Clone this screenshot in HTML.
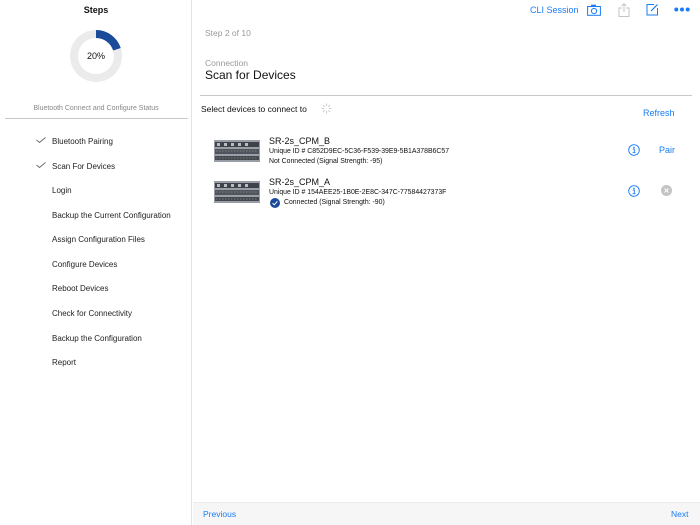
<!DOCTYPE html>
<html><head><meta charset="utf-8"><style>
*{margin:0;padding:0;box-sizing:border-box}
body{width:700px;height:525px;overflow:hidden;font-family:"Liberation Sans",sans-serif;background:#fff;position:relative;color:#111}
.side{position:absolute;left:0;top:0;width:192px;height:525px;background:#fff;border-right:1px solid #e4e4e4}
.a{position:absolute;white-space:nowrap}
.blue{color:#1a7cf5}
.step{position:absolute;left:52px;font-size:8px;color:#222}
.chk{position:absolute;left:36px;width:10px;height:6px}
.bottom{position:absolute;left:193px;top:502px;width:507px;height:23px;background:#f6f6f6;border-top:1px solid #ececec}
</style></head><body>
<div class="side">
 <div class="a" style="left:0;width:192px;text-align:center;top:5px;font-size:9px;font-weight:bold">Steps</div>
 <svg class="a" style="left:70px;top:30px" width="52" height="52" viewBox="0 0 52 52">
  <circle cx="26" cy="26" r="22" fill="none" stroke="#ebebeb" stroke-width="8"/>
  <circle cx="26" cy="26" r="22" fill="none" stroke="#1a4a9a" stroke-width="8" stroke-dasharray="27.6 200" transform="rotate(-90 26 26)"/>
 </svg>
 <div class="a" style="left:70px;width:52px;text-align:center;top:51px;font-size:9px">20%</div>
 <div class="a" style="left:0;width:192px;text-align:center;top:105px;font-size:7px;color:#888">Bluetooth Connect and Configure Status</div>
 <div class="a" style="left:5px;top:118px;width:183px;height:1px;background:#c8c8c8"></div>
 <svg class="chk" style="top:137px" viewBox="0 0 10 6"><path d="M0.5 3 L3.5 5.5 L9.5 0.5" fill="none" stroke="#666" stroke-width="0.9"/></svg>
 <svg class="chk" style="top:162px" viewBox="0 0 10 6"><path d="M0.5 3 L3.5 5.5 L9.5 0.5" fill="none" stroke="#666" stroke-width="0.9"/></svg>
 <div class="step" style="top:137px">Bluetooth Pairing</div>
 <div class="step" style="top:162px">Scan For Devices</div>
 <div class="step" style="top:186px">Login</div>
 <div class="step" style="top:211px">Backup the Current Configuration</div>
 <div class="step" style="top:235px">Assign Configuration Files</div>
 <div class="step" style="top:260px">Configure Devices</div>
 <div class="step" style="top:284px">Reboot Devices</div>
 <div class="step" style="top:309px">Check for Connectivity</div>
 <div class="step" style="top:334px">Backup the Configuration</div>
 <div class="step" style="top:358px">Report</div>
</div>

<div class="a blue" style="left:530px;top:5px;font-size:9px">CLI Session</div>
<svg class="a" style="left:587px;top:4px" width="14" height="12" viewBox="0 0 14 12"><rect x="0.6" y="2.5" width="12.8" height="8.8" fill="none" stroke="#1a7cf5" stroke-width="1"/><rect x="4" y="0.7" width="5" height="2" fill="#1a7cf5"/><circle cx="7" cy="7" r="2.6" fill="none" stroke="#1a7cf5" stroke-width="1"/></svg>
<svg class="a" style="left:618px;top:3px" width="12" height="14" viewBox="0 0 12 14"><path d="M4 5H1V13.5H11V5H8M6 9V0.8M3.5 3L6 0.8 8.5 3" fill="none" stroke="#c4c4c4" stroke-width="1"/></svg>
<svg class="a" style="left:646px;top:3px" width="13" height="13" viewBox="0 0 13 13"><path d="M8 1.5H1V12H11.5V5" fill="none" stroke="#1a7cf5" stroke-width="1"/><path d="M5 8L11.5 1.5" stroke="#1a7cf5" stroke-width="1.2"/></svg>
<svg class="a" style="left:674px;top:7px" width="16" height="5" viewBox="0 0 16 5"><circle cx="2.3" cy="2.5" r="2" fill="#1a7cf5"/><circle cx="8" cy="2.5" r="2" fill="#1a7cf5"/><circle cx="13.7" cy="2.5" r="2" fill="#1a7cf5"/></svg>

<div class="a" style="left:205px;top:28px;font-size:8.5px;color:#999">Step 2 of 10</div>
<div class="a" style="left:205px;top:58px;font-size:8.5px;color:#999">Connection</div>
<div class="a" style="left:205px;top:68px;font-size:12px;color:#111">Scan for Devices</div>
<div class="a" style="left:200px;top:95px;width:492px;height:1px;background:#c8c8c8"></div>
<div class="a" style="left:201px;top:104px;font-size:8.5px">Select devices to connect to</div>
<svg class="a" style="left:321px;top:103px" width="11" height="11" viewBox="0 0 11 11"><g stroke="#ccc" stroke-width="1"><path d="M5.5 0.5V3M5.5 8V10.5M0.5 5.5H3M8 5.5H10.5M2 2L3.7 3.7M7.3 7.3L9 9M2 9L3.7 7.3M7.3 3.7L9 2"/></g></svg>
<div class="a blue" style="left:643px;top:108px;font-size:9px">Refresh</div>

<svg class="a" style="left:214px;top:139px" width="46" height="24" viewBox="0 0 46 24"><rect x="0" y="1" width="46" height="22" fill="#9a9ea6"/><rect x="1" y="3" width="44" height="5" fill="#3e424a"/><g fill="#b8bcc2"><rect x="3" y="4" width="3" height="3"/><rect x="10" y="4" width="3" height="3"/><rect x="17" y="4" width="3" height="3"/><rect x="24" y="4" width="3" height="3"/><rect x="31" y="4" width="3" height="3"/></g><rect x="1" y="10" width="44" height="5" fill="#50545c"/><rect x="1" y="17" width="44" height="4" fill="#44484f"/><path d="M2 12H44M2 19H44" stroke="#aaa" stroke-width="0.6" stroke-dasharray="1.5 1.5"/></svg>
<div class="a" style="left:269px;top:136px;font-size:9px">SR-2s_CPM_B</div>
<div class="a" style="left:269px;top:148px;font-size:6.9px">Unique ID # C852D9EC-5C36-F539-39E9-5B1A378B6C57</div>
<div class="a" style="left:269px;top:158px;font-size:6.9px">Not Connected (Signal Strength: -95)</div>
<svg class="a" style="left:628px;top:144px" width="12" height="12" viewBox="0 0 12 12"><circle cx="6" cy="6" r="5.3" fill="none" stroke="#1a7cf5" stroke-width="0.9"/><circle cx="6" cy="3.4" r="0.8" fill="#1a7cf5"/><path d="M4.8 5H6.3V8.7M4.6 8.7H7.4" fill="none" stroke="#1a7cf5" stroke-width="0.9"/></svg>
<div class="a blue" style="left:659px;top:145px;font-size:9px">Pair</div>

<svg class="a" style="left:214px;top:180px" width="46" height="24" viewBox="0 0 46 24"><rect x="0" y="1" width="46" height="22" fill="#9a9ea6"/><rect x="1" y="3" width="44" height="5" fill="#3e424a"/><g fill="#b8bcc2"><rect x="3" y="4" width="3" height="3"/><rect x="10" y="4" width="3" height="3"/><rect x="17" y="4" width="3" height="3"/><rect x="24" y="4" width="3" height="3"/><rect x="31" y="4" width="3" height="3"/></g><rect x="1" y="10" width="44" height="5" fill="#50545c"/><rect x="1" y="17" width="44" height="4" fill="#44484f"/><path d="M2 12H44M2 19H44" stroke="#aaa" stroke-width="0.6" stroke-dasharray="1.5 1.5"/></svg>
<div class="a" style="left:269px;top:177px;font-size:9px">SR-2s_CPM_A</div>
<div class="a" style="left:269px;top:189px;font-size:6.9px">Unique ID # 154AEE25-1B0E-2E8C-347C-77584427373F</div>
<svg class="a" style="left:270px;top:198px" width="10" height="10" viewBox="0 0 10 10"><circle cx="5" cy="5" r="5" fill="#1a4a9a"/><path d="M2.6 5.2L4.3 6.8 7.4 3.3" fill="none" stroke="#fff" stroke-width="1"/></svg>
<div class="a" style="left:284px;top:199px;font-size:6.9px">Connected (Signal Strength: -90)</div>
<svg class="a" style="left:628px;top:185px" width="12" height="12" viewBox="0 0 12 12"><circle cx="6" cy="6" r="5.3" fill="none" stroke="#1a7cf5" stroke-width="0.9"/><circle cx="6" cy="3.4" r="0.8" fill="#1a7cf5"/><path d="M4.8 5H6.3V8.7M4.6 8.7H7.4" fill="none" stroke="#1a7cf5" stroke-width="0.9"/></svg>
<svg class="a" style="left:661px;top:185px" width="11" height="11" viewBox="0 0 11 11"><circle cx="5.5" cy="5.5" r="5.5" fill="#c4c4c4"/><path d="M3.5 3.5L7.5 7.5M7.5 3.5L3.5 7.5" stroke="#fff" stroke-width="1"/></svg>

<div class="bottom"></div>
<div class="a blue" style="left:203px;top:509px;font-size:8.5px">Previous</div>
<div class="a blue" style="left:671px;top:509px;font-size:8.5px">Next</div>
</body></html>
